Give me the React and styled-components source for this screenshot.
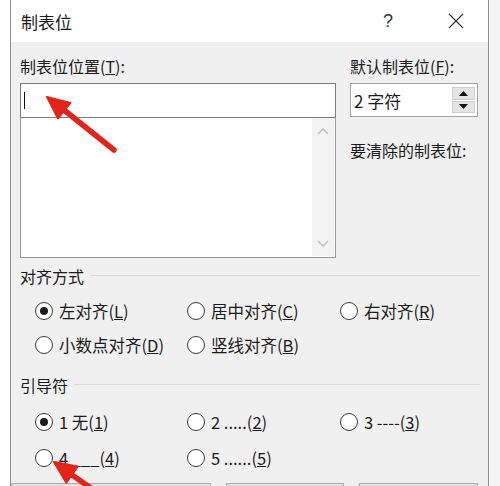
import React from "react";
import styled, { createGlobalStyle } from "styled-components";

const GlobalStyle = createGlobalStyle`
  html, body {
    margin: 0;
    padding: 0;
  }
  body {
    background: #f9f9f9;
    font-family: "Noto Sans CJK SC", "Noto Sans", sans-serif;
    color: #1b1b1b;
    overflow: hidden;
  }
`;

const Page = styled("div")`
  position: relative;
  width: 500px;
  height: 486px;
  overflow: hidden;
  background: linear-gradient(to right, #ffffff 0 10px, #f4f4f4 10px);
`;

const Dialog = styled("div")`
  margin-left: 10px;
  width: 479px;
  height: 520px;
  box-sizing: border-box;
  border-left: 1px solid #8f8f8f;
  border-right: 1px solid #8f8f8f;
  background: #f0f0f0;
  display: flex;
  flex-direction: column;
`;

const TitleBar = styled("div")`
  height: 42px;
  flex-shrink: 0;
  background: #ffffff;
  display: flex;
  align-items: center;
  padding-left: 10px;
  font-size: 17px;
`;

const TitleButtons = styled("div")`
  margin-left: auto;
  display: flex;
  height: 100%;
`;

const TitleBtn = styled("div")`
  width: ${(p) => p.$w}px;
  display: flex;
  align-items: center;
  justify-content: center;
  font-family: "Liberation Sans", sans-serif;
  font-size: 18px;
  color: #333;
`;

const Body = styled("div")`
  padding: 13px 10px 0 9px;
  font-size: 16px;
`;

const TopRow = styled("div")`
  display: grid;
  grid-template-columns: 316px 128px;
  column-gap: 14px;
`;

const Column = styled("div")`
  display: flex;
  flex-direction: column;
`;

const FieldLabel = styled("div")`
  line-height: 22px;
  height: 22px;
  margin-top: ${(p) => p.$top || 0}px;
  margin-bottom: 6px;
  white-space: nowrap;
`;

const TextInput = styled("div")`
  height: 35px;
  box-sizing: border-box;
  border: 1px solid #7d7d7d;
  background: #ffffff;
  display: flex;
  align-items: center;
  padding-left: 3px;
`;

const Caret = styled("span")`
  width: 1px;
  height: 17px;
  background: #111;
`;

const ListBox = styled("div")`
  height: 140px;
  box-sizing: border-box;
  border: 1px solid #9a9a9a;
  border-top: none;
  background: #ffffff;
  display: flex;
  justify-content: flex-end;
`;

const ScrollTrack = styled("div")`
  width: 22px;
  margin: 0 1px 1px 0;
  background: #f3f3f3;
  display: flex;
  flex-direction: column;
  justify-content: space-between;
  align-items: center;
  padding: 9px 0 8px;
`;

const Spinner = styled("div")`
  height: 34px;
  box-sizing: border-box;
  border: 1px solid #a3a3a3;
  background: #ffffff;
  display: flex;
  align-items: center;
  padding-left: 3px;
  font-size: 17px;
`;

const SpinButtons = styled("div")`
  margin-left: auto;
  margin-right: 2px;
  width: 23px;
  height: 26px;
  display: flex;
  flex-direction: column;
  gap: 1px;
`;

const SpinBtn = styled("div")`
  flex: 1;
  background: #e4e4e4;
  border: 1px solid #cfcfcf;
  display: flex;
  align-items: center;
  justify-content: center;
`;

const GroupHeader = styled("div")`
  display: flex;
  align-items: center;
  gap: 6px;
  height: 22px;
  margin-top: ${(p) => p.$top}px;
  margin-right: -2px;

  &::after {
    content: "";
    flex: 1;
    height: 1px;
    margin-top: -2px;
    background: #dcdcdc;
  }
`;

const RadioGrid = styled("div")`
  display: grid;
  grid-template-columns: 152px 153px 1fr;
  grid-auto-rows: ${(p) => p.$row}px;
  padding-left: 15px;
  margin-top: ${(p) => p.$top}px;
  font-size: 16.5px;
`;

const RadioItem = styled("label")`
  display: flex;
  align-items: center;
  gap: 6px;
  white-space: nowrap;
`;

const RadioCircle = styled("span")`
  width: 18px;
  height: 18px;
  flex-shrink: 0;
  box-sizing: border-box;
  border-radius: 50%;
  border: 1px solid #3a3a3a;
  background: #ffffff;
  display: flex;
  align-items: center;
  justify-content: center;

  &::after {
    content: "";
    width: 8px;
    height: 8px;
    border-radius: 50%;
    background: ${(p) => (p.$checked ? "#1b1b1b" : "transparent")};
  }
`;

const ButtonRow = styled("div")`
  display: flex;
  gap: 15px;
  margin-top: 7px;
  margin-left: -9px;
`;

const PushButton = styled("div")`
  width: ${(p) => p.$w}px;
  height: 30px;
  box-sizing: border-box;
  border: 1px solid #adadad;
  background: #e1e1e1;
`;

const Overlay = styled("svg")`
  position: absolute;
  left: 0;
  top: 0;
  pointer-events: none;
`;

const Chevron = ({ up }) => (
  <svg width="12" height="8" viewBox="0 0 12 8">
    <path
      d={up ? "M1 7 L6 2 L11 7" : "M1 1 L6 6 L11 1"}
      fill="none"
      stroke="#c2c2c2"
      strokeWidth="1.6"
    />
  </svg>
);

const Tri = ({ up }) => (
  <svg width="9" height="5" viewBox="0 0 9 5">
    <path d={up ? "M0 5 L4.5 0 L9 5 Z" : "M0 0 L4.5 5 L9 0 Z"} fill="#111" />
  </svg>
);

const Radio = ({ checked, children }) => (
  <RadioItem>
    <RadioCircle $checked={checked} />
    <span>{children}</span>
  </RadioItem>
);

const App = () => {
  return (
    <Page>
      <GlobalStyle />
      <Dialog>
        <TitleBar>
          制表位
          <TitleButtons>
            <TitleBtn $w={72}>?</TitleBtn>
            <TitleBtn $w={64}>
              <svg width="16" height="16" viewBox="0 0 16 16">
                <path d="M1 1 L15 15 M15 1 L1 15" stroke="#333" strokeWidth="1.1" />
              </svg>
            </TitleBtn>
          </TitleButtons>
        </TitleBar>
        <Body>
          <TopRow>
            <Column>
              <FieldLabel>
                制表位位置(<u>T</u>):
              </FieldLabel>
              <TextInput>
                <Caret />
              </TextInput>
              <ListBox>
                <ScrollTrack>
                  <Chevron up />
                  <Chevron />
                </ScrollTrack>
              </ListBox>
            </Column>
            <Column>
              <FieldLabel>
                默认制表位(<u>F</u>):
              </FieldLabel>
              <Spinner>
                2 字符
                <SpinButtons>
                  <SpinBtn>
                    <Tri up />
                  </SpinBtn>
                  <SpinBtn>
                    <Tri />
                  </SpinBtn>
                </SpinButtons>
              </Spinner>
              <FieldLabel $top={22}>要清除的制表位:</FieldLabel>
            </Column>
          </TopRow>

          <GroupHeader $top={7}>对齐方式</GroupHeader>
          <RadioGrid $row={34} $top={7}>
            <Radio checked>
              左对齐(<u>L</u>)
            </Radio>
            <Radio>
              居中对齐(<u>C</u>)
            </Radio>
            <Radio>
              右对齐(<u>R</u>)
            </Radio>
            <Radio>
              小数点对齐(<u>D</u>)
            </Radio>
            <Radio>
              竖线对齐(<u>B</u>)
            </Radio>
          </RadioGrid>

          <GroupHeader $top={12}>引导符</GroupHeader>
          <RadioGrid $row={36} $top={8}>
            <Radio checked>
              1 无(<u>1</u>)
            </Radio>
            <Radio>
              2 .....(<u>2</u>)
            </Radio>
            <Radio>
              3 ----(<u>3</u>)
            </Radio>
            <Radio>
              4 ___(<u>4</u>)
            </Radio>
            <Radio>
              5 ......(<u>5</u>)
            </Radio>
          </RadioGrid>

          <ButtonRow>
            <PushButton $w={200} />
            <PushButton $w={118} />
            <PushButton $w={119} />
          </ButtonRow>
        </Body>
      </Dialog>

      <Overlay width="500" height="486" viewBox="0 0 500 486">
        <g fill="#e3241b" stroke="#e3241b" strokeLinecap="round" strokeLinejoin="round">
          <line x1="114" y1="150" x2="64" y2="110" strokeWidth="5.5" />
          <polygon points="47,97 70.4,102.9 58,118.5" strokeWidth="2" />
          <line x1="98" y1="493" x2="72" y2="475" strokeWidth="5.5" />
          <polygon points="54,462 77.7,466.4 66.3,482.8" strokeWidth="2" />
        </g>
      </Overlay>
    </Page>
  );
};

export default App;
